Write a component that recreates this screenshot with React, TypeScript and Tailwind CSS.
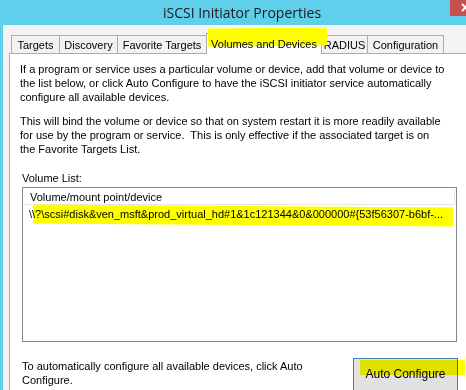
import React from "react";

const tabs = [
  { label: "Targets", w: "w-[49px]" },
  { label: "Discovery", w: "w-[59px]" },
  { label: "Favorite Targets", w: "w-[90px]" },
  { label: "Volumes and Devices", w: "w-[116px]" },
  { label: "RADIUS", w: "w-[47px]" },
  { label: "Configuration", w: "w-[77px]" },
];

function Tab({ label, w, active }: { label: string; w: string; active: boolean }) {
  if (active) {
    return (
      <div className={`relative -mb-px -ml-px h-[21px] ${w} border border-b-0 border-[#adadad] bg-white flex items-center justify-center whitespace-nowrap`}>
        <div className="absolute left-[1px] right-[-6px] top-[-6px] h-[18px] bg-[#ffff00] -rotate-[0.6deg]" />
        <span className="relative">{label}</span>
      </div>
    );
  }
  return (
    <div className={`h-[18px] ${w} -ml-px first:ml-0 border border-b-0 border-[#adadad] bg-[#f3f1f4] flex items-center justify-center whitespace-nowrap`}>
      {label}
    </div>
  );
}

export default function App() {
  return (
    <div
      className="w-[466px] h-[390px] overflow-hidden bg-[#5fcfec] flex flex-col text-black text-[11px] leading-[14px]"
      style={{ fontFamily: '"Liberation Sans", Arial, sans-serif' }}
    >
      {/* title bar */}
      <div className="relative h-[25px] shrink-0 flex items-center justify-center">
        <span className="text-[14px] leading-[20px] text-[#1a1a1a] ml-[18px]" style={{ fontFamily: '"Open Sans", sans-serif' }}>
          iSCSI Initiator Properties
        </span>
        <div className="absolute top-0 left-[450px] w-[30px] h-[16px] bg-[#c75050]">
          <svg width="30" height="16" viewBox="0 0 30 16" className="block">
            <path d="M12 4 L19 11 M19 4 L12 11" stroke="#fff" strokeWidth="2" />
          </svg>
        </div>
      </div>

      {/* dialog body */}
      <div className="ml-[3px] flex-1 bg-[#f5f2f6] pt-[8px] flex flex-col">
        <div className="flex items-end pl-[8px] h-[20px]">
          {tabs.map((t) => (
            <Tab key={t.label} label={t.label} w={t.w} active={t.label === "Volumes and Devices"} />
          ))}
        </div>

        <div className="ml-[6px] flex-1 bg-white border-l border-t border-[#adadad] pl-[10px] pt-[8px] pr-[8px]">
          <p className="whitespace-nowrap">
            If a program or service uses a particular volume or device, add that volume or device to
            <br />
            the list below, or click Auto Configure to have the iSCSI initiator service automatically
            <br />
            configure all available devices.
          </p>
          <p className="mt-[10px] whitespace-nowrap">
            This will bind the volume or device so that on system restart it is more readily available
            <br />
            for use by the program or service.&nbsp; This is only effective if the associated target is on
            <br />
            the Favorite Targets List.
          </p>

          <div className="mt-[15px] ml-[2px]">Volume List:</div>

          <div className="mt-[2px] ml-[2px] w-[435px] h-[155px] border border-[#828790] p-[1px]">
            <div className="h-[16px] border-b border-r border-[#e5e5e5] pl-[6px] flex items-center">
              Volume/mount point/device
            </div>
            <div className="relative h-[18px] pl-[5px] flex items-center whitespace-nowrap">
              <div className="absolute left-[9px] right-[2px] top-[1px] h-[19px] bg-[#ffff00] rotate-[0.4deg]" />
              <span className="relative">
                \\?\scsi#disk&amp;ven_msft&amp;prod_virtual_hd#1&amp;1c121344&amp;0&amp;000000#{"{"}53f56307-b6bf-...
              </span>
            </div>
          </div>

          <div className="mt-[16px] ml-[2px] flex items-start">
            <p className="w-[300px] mt-[1px]">
              To automatically configure all available devices, click Auto Configure.
            </p>
            <div className="relative ml-[31px] w-[105px] h-[34px] border border-[#3c7fb1] bg-[#e1e1e1]">
              <div className="absolute left-[6px] right-[-8px] top-[1px] h-[15px] bg-[#ffff00] mix-blend-multiply" />
              <div className="relative text-center pt-[8px] text-[12px]">Auto Configure</div>
            </div>
          </div>
        </div>
      </div>
    </div>
  );
}
